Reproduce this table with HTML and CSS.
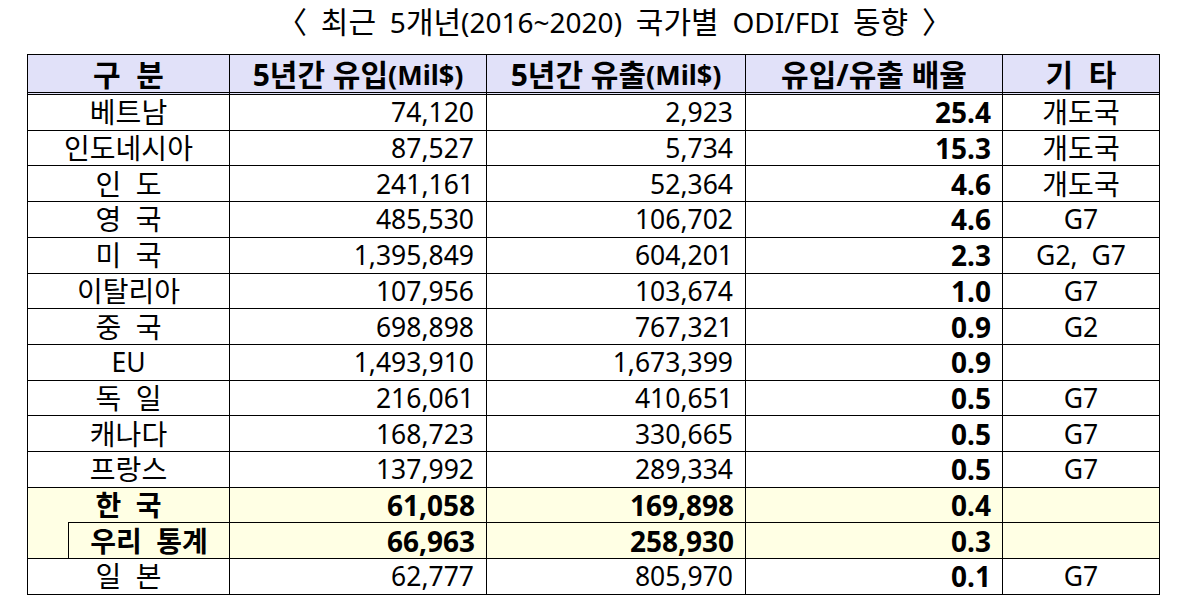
FILE: index.html
```html
<!DOCTYPE html>
<html lang="ko">
<head>
<meta charset="utf-8">
<title>최근 5개년 국가별 ODI/FDI 동향</title>
<link rel="stylesheet" href="styles.css">
</head>
<body>
<div class="page">
  <h1 class="title">〈 최근 <span class="lat">5</span>개년<span class="lat">(2016~2020)</span> 국가별 <span class="lat">ODI/FDI</span> 동향 〉</h1>
  <div class="table">
    <div class="c hd name">구  분</div>
    <div class="c hd">5년간 유입<span class="lat">(Mil$)</span></div>
    <div class="c hd">5년간 유출<span class="lat">(Mil$)</span></div>
    <div class="c hd">유입/유출 배율</div>
    <div class="c hd">기  타</div>

    <div class="c name">베트남</div><div class="c num">74,120</div><div class="c num">2,923</div><div class="c num b">25.4</div><div class="c etc">개도국</div>
    <div class="c name">인도네시아</div><div class="c num">87,527</div><div class="c num">5,734</div><div class="c num b">15.3</div><div class="c etc">개도국</div>
    <div class="c name">인  도</div><div class="c num">241,161</div><div class="c num">52,364</div><div class="c num b">4.6</div><div class="c etc">개도국</div>
    <div class="c name">영  국</div><div class="c num">485,530</div><div class="c num">106,702</div><div class="c num b">4.6</div><div class="c etc lat">G7</div>
    <div class="c name">미  국</div><div class="c num">1,395,849</div><div class="c num">604,201</div><div class="c num b">2.3</div><div class="c etc lat">G2,  G7</div>
    <div class="c name">이탈리아</div><div class="c num">107,956</div><div class="c num">103,674</div><div class="c num b">1.0</div><div class="c etc lat">G7</div>
    <div class="c name">중  국</div><div class="c num">698,898</div><div class="c num">767,321</div><div class="c num b">0.9</div><div class="c etc lat">G2</div>
    <div class="c name lat">EU</div><div class="c num">1,493,910</div><div class="c num">1,673,399</div><div class="c num b">0.9</div><div class="c etc"></div>
    <div class="c name">독  일</div><div class="c num">216,061</div><div class="c num">410,651</div><div class="c num b">0.5</div><div class="c etc lat">G7</div>
    <div class="c name">캐나다</div><div class="c num">168,723</div><div class="c num">330,665</div><div class="c num b">0.5</div><div class="c etc lat">G7</div>
    <div class="c name">프랑스</div><div class="c num">137,992</div><div class="c num">289,334</div><div class="c num b">0.5</div><div class="c etc lat">G7</div>

    <div class="c hl stub"></div>
    <div class="c hl b kr">한  국</div><div class="c hl num b">61,058</div><div class="c hl num b">169,898</div><div class="c hl num b">0.4</div><div class="c hl etc"></div>
    <div class="c hl b ours">우리  통계</div><div class="c hl num b">66,963</div><div class="c hl num b">258,930</div><div class="c hl num b">0.3</div><div class="c hl etc"></div>

    <div class="c name">일  본</div><div class="c num">62,777</div><div class="c num">805,970</div><div class="c num b">0.1</div><div class="c etc lat">G7</div>
  </div>
</div>
</body>
</html>
```

FILE: styles.css
```css
html, body {
  margin: 0;
  padding: 0;
  background: #ffffff;
}

body {
  font-family: "Noto Sans", "Noto Sans CJK KR", sans-serif;
  color: #000000;
}

.page {
  width: 1199px;
  height: 614px;
  overflow: hidden;
}

.title {
  margin: 0;
  height: 54px;
  box-sizing: border-box;
  padding: 4px 0 0 30px;
  font-size: 30px;
  line-height: 36px;
  font-weight: normal;
  text-align: center;
  white-space: pre;
  word-spacing: 6px;
}

.title .lat {
  font-size: 28px;
}

.table {
  margin-left: 27px;
  width: 1133px;
  box-sizing: border-box;
  display: grid;
  grid-template-columns: 40px 162px 257px 259px 257px 157px;
  grid-template-rows: 40px repeat(14, 35.714px);
  border-left: 1px solid #000;
  border-top: 1px solid #000;
}

.c {
  box-sizing: border-box;
  border-right: 1px solid #000;
  border-bottom: 1px solid #000;
  display: flex;
  align-items: center;
  justify-content: center;
  font-size: 28px;
  line-height: 30px;
  white-space: pre;
}

.c.lat {
  font-size: 26.5px;
}

.hd {
  background: #e1e1f9;
  font-weight: bold;
  font-size: 30px;
  border-bottom: 3px double #000;
  padding-top: 2px;
}

.hd .lat {
  font-size: 27px;
}

.name {
  grid-column: span 2;
}

.num {
  justify-content: flex-end;
  padding-right: 12px;
  font-size: 26.5px;
}

.num.b {
  font-size: 28px;
  padding-right: 11px;
}

.etc {
  justify-content: center;
}

.b {
  font-weight: bold;
}

.hl {
  background: #ffffe4;
}

.stub {
  grid-row: span 2;
  border-right: none;
}

.kr {
  padding-right: 40px;
}

.ours {
  border-left: 1px solid #000;
}
```
